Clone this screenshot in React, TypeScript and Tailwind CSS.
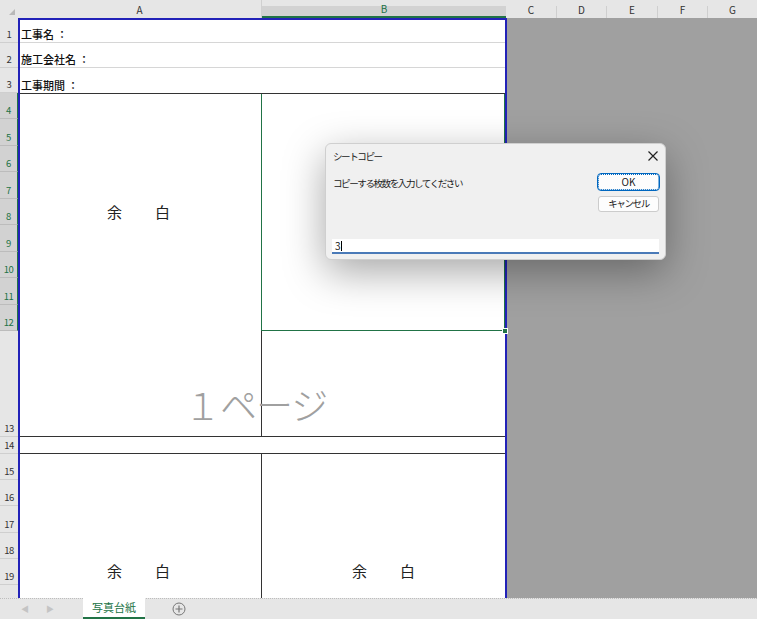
import React from "react";

const rowHeights = [25, 25, 25, 26, 27, 26, 27, 26, 27, 26, 27, 26, 106, 17, 26, 26, 27, 26, 26];
const selectedRows = [4, 5, 6, 7, 8, 9, 10, 11, 12];

const cols = [
  { name: "C", w: "w-[51px]" },
  { name: "D", w: "w-[50px]" },
  { name: "E", w: "w-[51px]" },
  { name: "F", w: "w-[50px]" },
  { name: "G", w: "flex-1" },
];

const font = { fontFamily: '"Noto Sans CJK JP", "Liberation Sans", sans-serif' };

const Yohaku: React.FC = () => (
  <div className="flex gap-[33px] text-[15px] text-[#222]">
    <span>余</span>
    <span>白</span>
  </div>
);

const ColumnHeader: React.FC = () => (
  <div className="flex h-[18px] bg-[#e6e6e6] text-[10px] text-[#333]">
    <div className="w-[18px] flex items-end justify-end pr-[3px] pb-[3px]">
      <svg width="6" height="6" viewBox="0 0 6 6">
        <path d="M6 0 L6 6 L0 6 Z" fill="#b8b8b8" />
      </svg>
    </div>
    <div className="w-[244px] flex items-end justify-center pb-[1px] border-r border-[#d0d0d0]">A</div>
    <div className="w-[244px] mt-[6px] flex items-end justify-center bg-[#d2d2d2] border-b-2 border-[#217346] text-[#217346]">
      B
    </div>
    {cols.map((c) => (
      <div
        key={c.name}
        className={`${c.w} mt-[6px] flex items-end justify-center pb-[1px] border-r border-[#cfcfcf] last:border-r-0`}
      >
        {c.name}
      </div>
    ))}
  </div>
);

const RowHeaders: React.FC = () => (
  <div className="w-[18px] flex flex-col bg-[#e6e6e6] text-[9.5px] tracking-[-0.5px]">
    {rowHeights.map((h, i) => {
      const n = i + 1;
      const sel = selectedRows.includes(n);
      return (
        <div
          key={n}
          style={{ height: h }}
          className={
            sel
              ? "flex items-end justify-center pb-[1px] border-b border-[#bcbcbc] bg-[#d2d2d2] text-[#217346] border-r border-r-[#217346]"
              : "flex items-end justify-center pb-[1px] border-b border-[#cfcfcf] text-[#333]"
          }
        >
          {n}
        </div>
      );
    })}
    <div className="flex-1" />
  </div>
);

const Dialog: React.FC = () => (
  <div className="absolute left-[325px] top-[143px] w-[341px] h-[117px] rounded-[6px] bg-[#f0f0f0] border border-[#cfcfcf] shadow-[0_12px_40px_rgba(0,0,0,0.35)] text-[9.5px] tracking-[-1.4px] text-[#1a1a1a] flex flex-col">
    <div className="h-[24px] flex items-center justify-between pl-[7px] pr-[6px]">
      <span>シートコピー</span>
      <svg width="12" height="12" viewBox="0 0 12 12">
        <path d="M1.5 1.5 L10.5 10.5 M10.5 1.5 L1.5 10.5" stroke="#222" strokeWidth="1.2" />
      </svg>
    </div>
    <div className="flex justify-between pl-[7px] pr-[6px] pt-[6px]">
      <span className="pt-[2px]">コピーする枚数を入力してください</span>
      <div className="flex flex-col gap-[6px]">
        <button className="w-[61px] h-[16px] rounded-[3px] bg-[#fdfdfd] border border-dotted border-[#0067c0] outline outline-1 outline-[#0067c0] text-[10px] tracking-normal leading-none">
          OK
        </button>
        <button className="w-[61px] h-[16px] rounded-[3px] bg-[#fdfdfd] border border-[#cccccc] text-[9.5px] leading-none">
          キャンセル
        </button>
      </div>
    </div>
    <div className="flex-1" />
    <div className="mx-[6px] mb-[5px] h-[15px] bg-white border-b-2 border-[#4a7ab8] flex items-center pl-[3px] text-[10px] tracking-normal">
      3<span className="inline-block w-px h-[10px] bg-black" />
    </div>
  </div>
);

const TabBar: React.FC = () => (
  <div className="h-[21px] flex bg-[#e6e6e6] border-t border-dotted border-[#bdbdbd] text-[11px]">
    <div className="w-[83px] flex items-center gap-[17px] pl-[21px] text-[#c4c4c4] text-[8px]">
      <span>◀</span>
      <span>▶</span>
    </div>
    <div className="w-[62px] bg-white flex items-center justify-center text-[#217346] border-b-2 border-[#217346] -mt-px">
      写真台紙
    </div>
    <div className="flex items-center pl-[27px]">
      <svg width="14" height="14" viewBox="0 0 14 14">
        <circle cx="7" cy="7" r="6" fill="none" stroke="#777" strokeWidth="1" />
        <path d="M7 3.5 V10.5 M3.5 7 H10.5" stroke="#777" strokeWidth="1.2" />
      </svg>
    </div>
  </div>
);

const App: React.FC = () => {
  return (
    <div className="relative w-[757px] h-[619px] overflow-hidden bg-[#a0a0a0] flex flex-col" style={font}>
      <ColumnHeader />
      <div className="flex flex-1 min-h-0">
        <RowHeaders />
        <div className="w-[489px] flex flex-col bg-white border-2 border-b-0 border-[#2222b8] text-[11px] text-[#111]">
          <div className="h-[23px] flex items-end pl-[1px] border-b border-[#d6d6d6] font-medium">工事名 ：</div>
          <div className="h-[25px] flex items-end pl-[1px] border-b border-[#d6d6d6] font-medium">施工会社名 ：</div>
          <div className="h-[26px] flex items-end pl-[1px] border-b border-[#333] font-medium">工事期間 ：</div>
          <div className="h-[237px] flex">
            <div className="w-[242px] border-r border-[#333] flex items-center justify-center pr-[4px]">
              <Yohaku />
            </div>
            <div className="flex-1 border border-[#217346] border-t-0 -ml-px relative">
              <div className="absolute -right-[4px] -bottom-[4px] w-[6px] h-[6px] bg-[#217346] border border-white" />
            </div>
          </div>
          <div className="h-[106px] flex border-b border-[#333]">
            <div className="w-[242px] border-r border-[#333]" />
            <div className="flex-1" />
          </div>
          <div className="h-[17px] border-b border-[#333]" />
          <div className="flex-1 flex">
            <div className="w-[242px] border-r border-[#333] flex items-end justify-center pb-[16px] pr-[4px]">
              <Yohaku />
            </div>
            <div className="flex-1 flex items-end justify-center pb-[16px]">
              <Yohaku />
            </div>
          </div>
        </div>
        <div className="flex-1" />
      </div>
      <TabBar />

      <div className="absolute left-[184px] top-[380px] text-[37px] leading-[48px] font-light text-[#a0a0a0] tracking-[-1px] pointer-events-none">
        １ページ
      </div>

      <Dialog />
    </div>
  );
};

export default App;
